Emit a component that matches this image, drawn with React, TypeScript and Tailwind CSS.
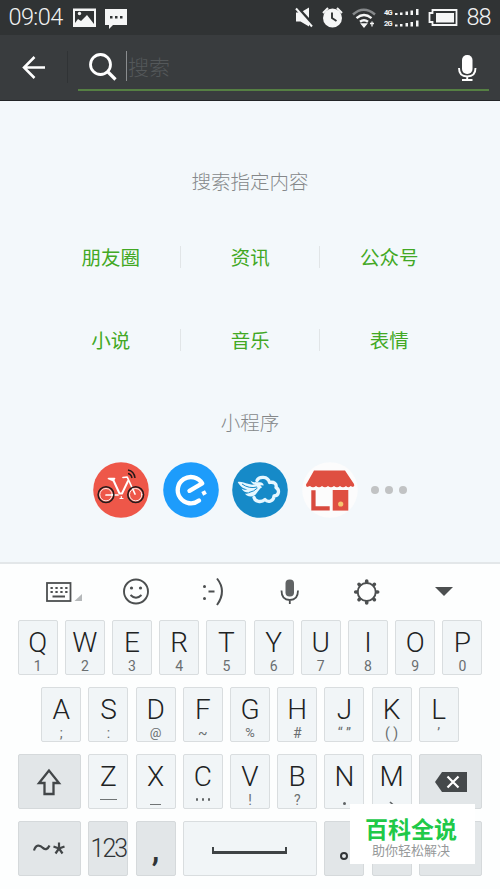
import type { ReactNode } from 'react';

const CJK = "font-['Noto_Sans_CJK_SC',sans-serif]";

function StatusBar() {
  return (
    <div className="flex h-[35px] items-center bg-[#303334] pl-[8.500px] text-white">
      <span className="w-[55.500px] pt-px text-[23.500px] leading-none tracking-[-0.600px] font-light text-[#f0f2f2]">09:04</span>
      <svg width="66" height="35" viewBox="64 0 66 35" className="shrink-0">
        <path d="M73 8.500H96V27H73Z" fill="#f5f6f6" />
        <path d="M75 11H94V24L87 15L81 21L78 19L75 23Z" fill="#303334" />
        <circle cx="79.500" cy="13.500" r="1.700" fill="#f5f6f6" />
        <path d="M105 9H127V25H113L109 29V25H105Z" fill="#f5f6f6" />
        <path d="M110 16h2.500v2.500H110zM115 16h2.500v2.500H115zM120 16h2.500v2.500H120z" fill="#303334" />
      </svg>
      <svg width="170" height="35" viewBox="290 0 170 35" className="ml-auto shrink-0">
        <path d="M296 12.500h4.500l8.500-5v19l-8.500-5h-4.500z" fill="#f5f6f6" />
        <path d="M297 7.500l16 17.500" stroke="#303334" strokeWidth="3.500" />
        <path d="M296 8.500l16 18" stroke="#f5f6f6" strokeWidth="2" />
        <circle cx="332.500" cy="18" r="9.500" fill="#f5f6f6" />
        <path d="M323 13l5-5M342 13l-5-5" stroke="#f5f6f6" strokeWidth="2" />
        <path d="M332 12.500V18l4.500 3" stroke="#303334" strokeWidth="1.900" fill="none" />
        <path d="M353 14.500Q363.500 5 375 14.500" stroke="#85888a" strokeWidth="2.500" fill="none" />
        <path d="M356.500 18.200Q364 12 371.500 18.200M360 21.800Q364 18.500 368 21.800" stroke="#f5f6f6" strokeWidth="2.400" fill="none" />
        <path d="M361.500 24h5l-2.500 3zM370 23.500h4M372 21.500v5" fill="#f5f6f6" stroke="#f5f6f6" strokeWidth="1.300" />
        <g fill="#f5f6f6" fontSize="7.500" fontWeight="bold" fontFamily="Roboto">
          <text x="384" y="15" textLength="8.500">4G</text>
          <text x="384" y="25.500" textLength="8.500">2G</text>
        </g>
        <path d="M395 13h2.500v2H395zM400 12.500h2.500V15H400zM405.500 11.500h2.500V15h-2.500zM410.500 10.500h2.500V15h-2.500zM416 9h2.500v6H416zM395 24.500h2.500v2H395zM400 24h2.500v2.500H400zM405.500 23h2.500v3.500h-2.500zM410.500 22h2.500v4.500h-2.500zM416 20.500h2.500v6H416z" fill="#f5f6f6" />
        <path d="M432.500 10H456.500V25H432.500V22H429.500V13H432.500Z" fill="none" stroke="#f5f6f6" strokeWidth="1.800" />
        <path d="M436 13h18v9.500h-18z" fill="#f5f6f6" />
      </svg>
      <span className="w-[40px] pt-px pl-[6.500px] text-[23.500px] leading-none tracking-[-1px] font-light text-[#f0f2f2]">88</span>
    </div>
  );
}

function SearchHeader() {
  return (
    <div className="flex h-[66px] border-b border-[#222527] bg-[#393c3e]">
      <div className="my-[16px] flex h-8 w-[68px] shrink-0 items-center border-r border-[#303335] pl-[22px]">
        <svg width="25" height="24" viewBox="0 0 25 24" fill="none" stroke="#fff" strokeWidth="2.500">
          <path d="M12.500 2L2 12.500L12.500 23M2 12.500H23" />
        </svg>
      </div>
      <div className="mr-[11px] ml-[10px] mb-[9px] flex flex-1 items-center border-b-2 border-[#557f43] pt-2">
        <svg className="mt-[3px] ml-[10px] shrink-0" width="30" height="30" viewBox="0 0 30 30" fill="none" stroke="#fff" strokeWidth="2.800">
          <circle cx="12.500" cy="11.500" r="10" />
          <path d="M19.500 18.500L27.500 26.500" strokeWidth="3.200" />
        </svg>
        <span className="ml-[8px] h-[30px] w-px bg-[#8a8d8f]" />
        <span className={`${CJK} pl-px text-[21px] leading-[30px] font-light text-[#54585a]`}>搜索</span>
        <svg className="mt-[4px] mr-[12px] ml-auto" width="20" height="28" viewBox="0 0 20 28" fill="none" stroke="#fff" strokeWidth="1.900">
          <rect x="5" y="1" width="10.500" height="19" rx="5" fill="#fff" stroke="none" />
          <path d="M2 14Q2 22.500 10.200 22.500Q18.500 22.500 18.500 14M10.200 22V26M5 26H15.500" />
        </svg>
      </div>
    </div>
  );
}

function CategoryRow({ items }: { items: string[] }) {
  return (
    <div className="-ml-[2px] flex h-[24px] w-[417px] items-center justify-center">
      {items.map((item, i) => (
        <div key={item} className={`flex h-[22px] w-[139px] shrink-0 items-center justify-center pl-[1.500px] text-[19.500px] font-normal text-[#42a824] ${i ? 'border-l border-[#e1e5e7]' : ''}`}>
          {item}
        </div>
      ))}
    </div>
  );
}

function BikeLogo() {
  return (
    <svg width="56" height="56" viewBox="0 0 56 56" fill="none">
      <circle cx="28" cy="28" r="27.800" fill="#ee5749" />
      <g stroke="#fff" strokeLinecap="round" strokeLinejoin="round">
        <circle cx="13" cy="32.700" r="6.200" strokeWidth=".9" />
        <circle cx="42.700" cy="32.700" r="6.200" strokeWidth=".9" />
        <path d="M15.500 16.500H21.500L20 18.500Z" strokeWidth="1.700" />
        <path d="M20.500 18.500L26.500 31.500H29L35 19" strokeWidth="2" />
        <path d="M30 15.500L34.200 15L42 32M13 33H25" strokeWidth="1.700" />
        <path d="M28.300 34.500V36.500M27 36.500H30" strokeWidth="1.200" />
      </g>
      <circle cx="13" cy="32.700" r="7.900" stroke="#211b1b" strokeWidth="1.500" />
      <circle cx="42.700" cy="32.700" r="7.900" stroke="#211b1b" strokeWidth="1.500" />
      <path d="M35 8Q41 9 42 16M35 11.500Q38 12 39 16" stroke="#24191a" strokeWidth="1.500" />
    </svg>
  );
}

function ElemeLogo() {
  return (
    <svg width="56" height="56" viewBox="0 0 56 56" fill="none">
      <circle cx="28" cy="28" r="27.800" fill="#1d9cfb" />
      <path d="M26.500 28.800L39.200 21.300A13.200 13.200 0 1 0 36 38.600" stroke="#fff" strokeWidth="4.400" strokeLinejoin="round" strokeLinecap="round" />
      <path d="M38.300 30L42 28.200L43.800 31.800L40.200 33.800Z" fill="#fff" />
    </svg>
  );
}

function CloudLogo() {
  return (
    <svg width="56" height="56" viewBox="0 0 56 56" fill="none">
      <circle cx="28" cy="28" r="27.800" fill="#168ac8" />
      <path d="M25 18.500C27 14 36 14 37.500 20.500C42 19.500 45 22 44 25.500C48 28 47 34 42 34C42 39 36 41 33 37.500C29 41 23 39.500 22 35.500" stroke="#e6f7ff" strokeWidth="3.300" strokeLinejoin="round" strokeLinecap="round" />
      <path d="M5.700 20C12 19 16 23.500 22 22.500C26.500 21.500 29 22.500 30 25.500C26 27 25 34.500 19 34.500C15.500 34.500 13.500 32.500 13 31.500C15 32 17 31.500 18 30.500C14 31 10.500 29 9.500 26.500C12 28 14 28 15.500 27.300C11 27 8 24 5.700 20Z" fill="#e6f7ff" />
      <path d="M18.500 18.500C21 21 25 20 28 20.300C30.500 20.500 32 22 31.500 23.500C26 23.500 20 23.500 18.500 18.500Z" fill="#e6f7ff" />
      <path d="M10 22Q17 27 25 25M17 30.500Q22 29.500 25.500 26" stroke="#168ac8" />
    </svg>
  );
}

function ShopLogo() {
  return (
    <svg width="56" height="56" viewBox="0 0 56 56" fill="none">
      <circle cx="28" cy="28" r="27.800" fill="#fcfcfc" />
      <path d="M12 8.500H43L52 22Q53 24 51 25L48.500 24Q46.500 26.500 44 24Q41 26.500 38 24Q35 26.500 32 24Q29 26.500 26 24Q23 26.500 20 24Q17 26.500 14 24Q11 26.500 8 24L5 25Q3 23 5 21Z" fill="#df4f41" />
      <path d="M9.300 28.300H13.600V44.300H27.700V48.600H9.300Z" fill="#d84a3e" />
      <path d="M30.700 28H46.300V48.600H30.700Z" fill="#df4f41" />
      <circle cx="38.700" cy="42" r="2.600" fill="#f6c66f" />
    </svg>
  );
}

function SearchContent() {
  return (
    <main className={`${CJK} flex h-[461px] flex-col items-center bg-[#f3f8fb]`}>
      <h2 className="mt-[65px] h-[29px] text-[19.500px] leading-[29px] font-light text-[#85888a]">搜索指定内容</h2>
      <div className="mt-[50px] flex flex-col gap-[59px]">
        <CategoryRow items={['朋友圈', '资讯', '公众号']} />
        <CategoryRow items={['小说', '音乐', '表情']} />
      </div>
      <h2 className="mt-[54.500px] h-[29px] text-[19.500px] leading-[29px] font-light text-[#85888a]">小程序</h2>
      <div className="mt-[26.500px] flex w-[314px] items-center gap-[13.500px]">
        <BikeLogo />
        <ElemeLogo />
        <CloudLogo />
        <ShopLogo />
        <div className="flex shrink-0 gap-[6px]">
          <i className="size-2 rounded-full bg-[#c1c3c4]" />
          <i className="size-2 rounded-full bg-[#c1c3c4]" />
          <i className="size-2 rounded-full bg-[#c1c3c4]" />
        </div>
      </div>
    </main>
  );
}

function KeyboardTools() {
  return (
    <div className="h-[56px] pt-[12px]">
      <svg width="500" height="32" viewBox="0 576 500 32" fill="none" stroke="#4c4f50">
        <rect x="47" y="583" width="23.500" height="18" strokeWidth="1.800" />
        <path d="M50.500 588H68M50.500 592H68" strokeWidth="2" strokeDasharray="2.300 2.600" />
        <path d="M52.500 596.500H65" strokeWidth="2" />
        <path d="M74.500 601H82V594Z" fill="#b5b8ba" stroke="none" />
        <circle cx="136" cy="591.500" r="12" strokeWidth="1.900" />
        <path d="M130.500 595Q136 600.500 141.500 595" strokeWidth="1.900" />
        <circle cx="131.500" cy="588" r="1.600" fill="#4c4f50" stroke="none" />
        <circle cx="140.500" cy="588" r="1.600" fill="#4c4f50" stroke="none" />
        <circle cx="204.500" cy="586.500" r="1.500" fill="#4c4f50" stroke="none" />
        <circle cx="204.500" cy="598.500" r="1.500" fill="#4c4f50" stroke="none" />
        <path d="M208.500 591.500H214.500M217 578.500Q227 591 217 605" strokeWidth="2" />
        <rect x="285.500" y="579.500" width="8.500" height="17" rx="4" fill="#606364" stroke="none" />
        <path d="M281.500 590.500Q281.500 600 289.800 600Q298 600 298 590.500M289.800 600V604" strokeWidth="1.800" />
        <circle cx="366.700" cy="592" r="9" strokeWidth="1.900" />
        <g strokeWidth="3.600" strokeLinecap="round">
          <path d="M366.700 582V581M366.700 602V603M356.700 592H355.700M376.700 592H377.700M359.600 584.900L359 584.300M373.800 584.900L374.400 584.300M359.600 599.100L359 599.700M373.800 599.100L374.400 599.700" />
        </g>
        <path d="M435 587H453L444 596Z" fill="#4c4f50" stroke="none" />
      </svg>
    </div>
  );
}

function Key({ label, sub }: { label: string; sub: ReactNode }) {
  return (
    <div className="flex h-[55px] w-[40px] shrink-0 flex-col items-center rounded-[2px] border border-[#d9dddf] bg-[#f1f5f7] pt-[7px] text-[#202223]">
      <span className="h-[29px] text-[28px] leading-[29px] font-[350]">{label}</span>
      <span className="flex h-[18px] items-center justify-center text-[14px] leading-[18px] whitespace-nowrap text-[#6a6e70]">{sub}</span>
    </div>
  );
}

function ActionKey({ width, children }: { width: string; children?: ReactNode }) {
  return <div className={`flex h-[55px] ${width} shrink-0 items-center justify-center rounded-[2px] border border-[#d5d9db] bg-[#e2e6e8] text-[#303436]`}>{children}</div>;
}

const topRow = [['Q', '1'], ['W', '2'], ['E', '3'], ['R', '4'], ['T', '5'], ['Y', '6'], ['U', '7'], ['I', '8'], ['O', '9'], ['P', '0']];
const middleRow: [string, ReactNode][] = [
  ['A', ';'],
  ['S', ':'],
  ['D', <span className="text-[13px]">@</span>],
  ['F', '~'],
  ['G', <span className="text-[13px]">%</span>],
  ['H', '#'],
  ['J', '“ ”'],
  ['K', '( )'],
  ['L', '’'],
];
const bottomRow: [string, ReactNode][] = [
  ['Z', <i className="h-[1.500px] w-[17px] bg-[#707475]" />],
  ['X', <i className="mt-[10px] h-[1.500px] w-[11px] bg-[#707475]" />],
  ['C', <span className="flex gap-[3.500px]"><i className="size-[2.500px] rounded-full bg-[#606466]" /><i className="size-[2.500px] rounded-full bg-[#606466]" /><i className="size-[2.500px] rounded-full bg-[#606466]" /></span>],
  ['V', '!'],
  ['B', '?'],
  ['N', <i className="mt-[8px] size-[3px] rounded-full bg-[#606466]" />],
  ['M', <svg className="mt-[7px]" width="6" height="5" viewBox="0 0 6 5"><path d="M1 1L5 4.500" stroke="#606466" strokeWidth="1.600" /></svg>],
];

function Keyboard() {
  return (
    <section className="h-[327px] border-t-2 border-[#e3e7e9] bg-[#fdfefe]">
      <KeyboardTools />
      <div className="flex flex-col items-center gap-[12px]">
        <div className="flex gap-[7.200px]">
          {topRow.map(([label, sub]) => <Key key={label} label={label} sub={sub} />)}
        </div>
        <div className="flex gap-[7.200px]">
          {middleRow.map(([label, sub]) => <Key key={label} label={label} sub={sub} />)}
        </div>
        <div className="flex gap-[7.200px]">
          <ActionKey width="w-[63.600px]">
            <svg width="26" height="28" viewBox="0 0 26 28" fill="none" stroke="#424648" strokeWidth="2.300">
              <path d="M13 2.500L3 15H8.500V26H17.500V15H23Z" />
            </svg>
          </ActionKey>
          {bottomRow.map(([label, sub]) => <Key key={label} label={label} sub={sub} />)}
          <ActionKey width="w-[63.600px]">
            <svg width="34" height="22" viewBox="0 0 34 22">
              <path d="M8 1H33V21H8L1 11Z" fill="#45494b" />
              <path d="M13.500 5.500L24.500 16.500M24.500 5.500L13.500 16.500" stroke="#fff" strokeWidth="2.200" />
            </svg>
          </ActionKey>
        </div>
        <div className="flex gap-[7.200px]">
          <ActionKey width="w-[63.600px]">
            <svg width="34" height="28" viewBox="0 0 34 28" fill="none" stroke="#424648" strokeWidth="2.200">
              <path d="M2 15.500C4 9 8 10 11 13Q15 16 17.500 10.500M27 7.500V13.500M27 13.500L21.500 11.500M27 13.500L32.500 11.500M27 13.500L23.500 18.500M27 13.500L30.500 18.500" />
            </svg>
          </ActionKey>
          <ActionKey width="w-[40px]"><span className="text-[25px] font-[350] tracking-[-2px]">123</span></ActionKey>
          <ActionKey width="w-[40px]"><span className="text-[34px] leading-none font-medium">,</span></ActionKey>
          <div className="flex h-[55px] w-[134.400px] items-center justify-center rounded-[2px] border border-[#d9dddf] bg-[#f1f5f7] pt-1">
            <i className="h-[7px] w-[75px] border-x-2 border-b-[3px] border-[#3f4345]" />
          </div>
          <ActionKey width="w-[40px]"><i className="mt-[14px] size-[8px] rounded-full border-2 border-[#303436]" /></ActionKey>
          <ActionKey width="w-[40px]" />
          <ActionKey width="w-[63.600px]" />
        </div>
      </div>
    </section>
  );
}

export default function App() {
  return (
    <div className="relative h-[889px] w-[500px] overflow-hidden bg-[#fdfefe] font-['Roboto','Noto_Sans_CJK_SC',sans-serif]">
      <StatusBar />
      <SearchHeader />
      <SearchContent />
      <Keyboard />
      <div className={`${CJK} absolute top-[804px] left-[350px] flex h-[60px] w-[125px] flex-col items-center bg-white pr-[3px]`}>
        <strong className="mt-[13px] text-[23px] leading-[23px] font-bold text-[#20c948]">百科全说</strong>
        <span className="mt-[2px] text-[13px] leading-[15px] text-[#96999a]">助你轻松解决</span>
      </div>
    </div>
  );
}
